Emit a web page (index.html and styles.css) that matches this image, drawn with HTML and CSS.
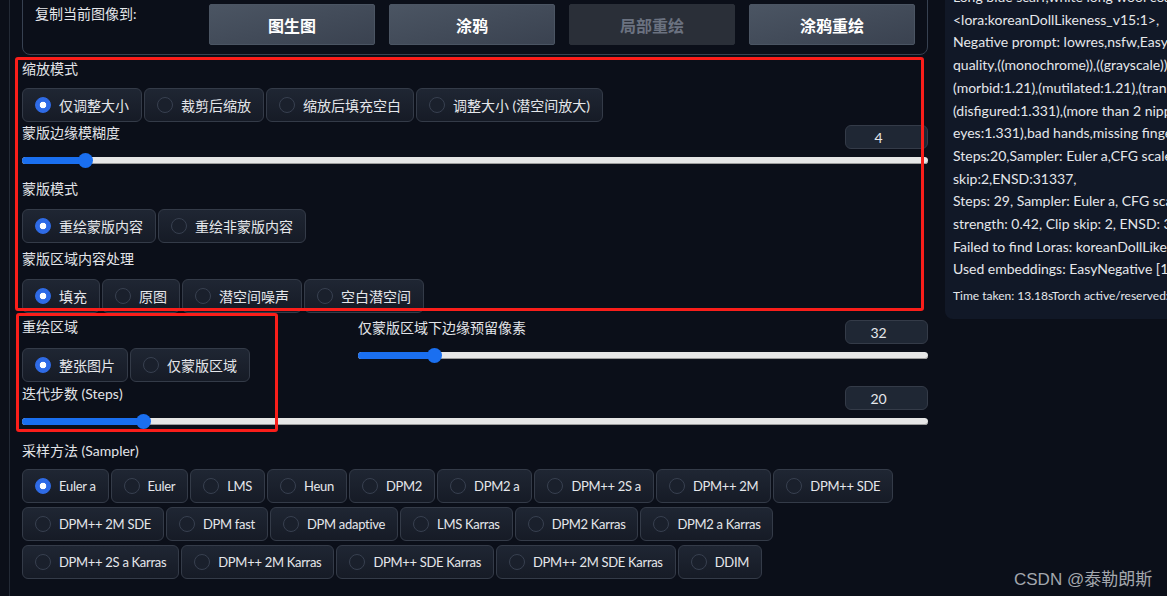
FILE: index.html
```html
<!DOCTYPE html>
<html lang="zh-CN">
<head>
    <meta charset="UTF-8">
    <meta name="viewport" content="width=device-width, initial-scale=1.0">
    <title>局部重绘</title>
    <link rel="stylesheet" href="styles.css">
</head>
<body>
    <div class="page">
        <div class="left">
            <div class="panel">
                <div class="copy-box">
                    <span class="copy-label">复制当前图像到:</span>
                    <div class="copy-buttons">
                        <button class="btn">图生图</button>
                        <button class="btn">涂鸦</button>
                        <button class="btn disabled">局部重绘</button>
                        <button class="btn">涂鸦重绘</button>
                    </div>
                </div>

                <div class="label resize-label">缩放模式</div>
                <div class="radios mt9">
                    <label class="radio checked"><span class="dot"></span>仅调整大小</label>
                    <label class="radio"><span class="dot"></span>裁剪后缩放</label>
                    <label class="radio"><span class="dot"></span>缩放后填充空白</label>
                    <label class="radio"><span class="dot"></span>调整大小 (潜空间放大)</label>
                </div>

                <div class="head mt1">
                    <span class="label">蒙版边缘模糊度</span>
                    <input class="num" type="text" value="4">
                </div>
                <div class="slider mt1">
                    <div class="track"><div class="fill" style="--p: 0.0625"></div><div class="thumb" style="--p: 0.0625"></div></div>
                </div>

                <div class="label mt9">蒙版模式</div>
                <div class="radios mt10">
                    <label class="radio checked"><span class="dot"></span>重绘蒙版内容</label>
                    <label class="radio"><span class="dot"></span>重绘非蒙版内容</label>
                </div>

                <div class="label mt6">蒙版区域内容处理</div>
                <div class="radios mt10">
                    <label class="radio checked"><span class="dot"></span>填充</label>
                    <label class="radio"><span class="dot"></span>原图</label>
                    <label class="radio"><span class="dot"></span>潜空间噪声</label>
                    <label class="radio"><span class="dot"></span>空白潜空间</label>
                </div>

                <div class="split">
                    <div class="split-left">
                        <div class="label">重绘区域</div>
                        <div class="radios mt11">
                            <label class="radio checked"><span class="dot"></span>整张图片</label>
                            <label class="radio"><span class="dot"></span>仅蒙版区域</label>
                        </div>
                    </div>
                    <div class="split-right">
                        <div class="head">
                            <span class="label">仅蒙版区域下边缘预留像素</span>
                            <input class="num" type="text" value="32">
                        </div>
                        <div class="slider mt1">
                            <div class="track"><div class="fill" style="--p: 0.125"></div><div class="thumb" style="--p: 0.125"></div></div>
                        </div>
                    </div>
                </div>

                <div class="head mt2">
                    <span class="label">迭代步数 (Steps)</span>
                    <input class="num" type="text" value="20">
                </div>
                <div class="slider mt1">
                    <div class="track"><div class="fill" style="--p: 0.1275"></div><div class="thumb" style="--p: 0.1275"></div></div>
                </div>

                <div class="label mt10">采样方法 (Sampler)</div>
                <div class="sampler">
                    <div class="radios">
                        <label class="radio checked"><span class="dot"></span>Euler a</label>
                        <label class="radio"><span class="dot"></span>Euler</label>
                        <label class="radio"><span class="dot"></span>LMS</label>
                        <label class="radio"><span class="dot"></span>Heun</label>
                        <label class="radio"><span class="dot"></span>DPM2</label>
                        <label class="radio"><span class="dot"></span>DPM2 a</label>
                        <label class="radio"><span class="dot"></span>DPM++ 2S a</label>
                        <label class="radio"><span class="dot"></span>DPM++ 2M</label>
                        <label class="radio"><span class="dot"></span>DPM++ SDE</label>
                    </div>
                    <div class="radios">
                        <label class="radio"><span class="dot"></span>DPM++ 2M SDE</label>
                        <label class="radio"><span class="dot"></span>DPM fast</label>
                        <label class="radio"><span class="dot"></span>DPM adaptive</label>
                        <label class="radio"><span class="dot"></span>LMS Karras</label>
                        <label class="radio"><span class="dot"></span>DPM2 Karras</label>
                        <label class="radio"><span class="dot"></span>DPM2 a Karras</label>
                    </div>
                    <div class="radios">
                        <label class="radio"><span class="dot"></span>DPM++ 2S a Karras</label>
                        <label class="radio"><span class="dot"></span>DPM++ 2M Karras</label>
                        <label class="radio"><span class="dot"></span>DPM++ SDE Karras</label>
                        <label class="radio"><span class="dot"></span>DPM++ 2M SDE Karras</label>
                        <label class="radio"><span class="dot"></span>DDIM</label>
                    </div>
                </div>

                <!-- red annotation frames -->
                <div class="mark mark-mask"></div>
                <div class="mark mark-area"></div>
            </div>
        </div>

        <div class="info">
            <div>Long blue scarf,white long wool coat,</div>
            <div>&lt;lora:koreanDollLikeness_v15:1&gt;,</div>
            <div>Negative prompt: lowres,nsfw,EasyNegative,(worst</div>
            <div>quality,((monochrome)),((grayscale)),skin spots,</div>
            <div>(morbid:1.21),(mutilated:1.21),(tranny:1.331),</div>
            <div>(disfigured:1.331),(more than 2 nipples:1.331),</div>
            <div>eyes:1.331),bad hands,missing fingers,</div>
            <div>Steps:20,Sampler: Euler a,CFG scale:7,Seed:</div>
            <div>skip:2,ENSD:31337,</div>
            <div>Steps: 29, Sampler: Euler a, CFG scale: 7,</div>
            <div>strength: 0.42, Clip skip: 2, ENSD: 31337</div>
            <div>Failed to find Loras: koreanDollLikeness_v15</div>
            <div>Used embeddings: EasyNegative [119b]</div>
            <div class="time">Time taken: 13.18sTorch active/reserved: 5599/6448 MiB</div>
        </div>
    </div>

    <div class="watermark">CSDN @泰勒朗斯</div>
</body>
</html>
```

FILE: styles.css
```css
body {
    margin: 0;
    background: #0b0f19;
    color: #e5e7eb;
    font-family: Lato, "Noto Sans CJK SC", sans-serif;
    font-size: 14px;
    overflow: hidden;
}
.page {
    display: flex;
    align-items: flex-start;
}
.left {
    width: 928px;
    padding-left: 9px;
    margin-right: 17px;
    box-sizing: border-box;
    flex-shrink: 0;
}
.panel {
    display: flow-root;
    position: relative;
    border-left: 1px solid #232a36;
    padding-left: 12px;
    min-height: 620px;
}

/* copy to box */
.copy-box {
    display: flex;
    margin-top: -8px;
    padding: 11px 12px 9px 12px;
    border: 1px solid #374151;
    border-radius: 8px;
}
.copy-label {
    width: 174px;
    line-height: 20px;
    color: #e5e7eb;
}
.copy-buttons {
    display: flex;
    gap: 14px;
}
.btn {
    width: 166px;
    height: 41px;
    border: 1px solid #4b5563;
    border-radius: 2px;
    background: linear-gradient(to bottom right, #4b5563, #3a4250);
    color: #fff;
    font-family: Lato, "Noto Sans CJK SC", sans-serif;
    font-size: 16px;
    font-weight: bold;
}
.btn.disabled {
    background: #2a2f38;
    border-color: #2a2f38;
    color: #6b7280;
}

/* labels and spacing */
.label {
    line-height: 20px;
    color: #e2e4e8;
}
.resize-label { margin-top: 4px; }
.mt1 { margin-top: 1px; }
.mt2 { margin-top: 2px; }
.mt6 { margin-top: 6px; }
.mt9 { margin-top: 9px; }
.mt10 { margin-top: 10px; }
.mt11 { margin-top: 11px; }

/* radio groups */
.radios {
    display: flex;
    gap: 2px;
}
.radio {
    display: flex;
    align-items: center;
    gap: 8px;
    height: 34px;
    padding: 0 12px;
    box-sizing: border-box;
    border: 1px solid #343b48;
    border-radius: 6px;
    background: linear-gradient(to bottom, #1f2633, #161b26);
    color: #e5e7eb;
    white-space: nowrap;
}
.dot {
    width: 16px;
    height: 16px;
    flex-shrink: 0;
    box-sizing: border-box;
    border-radius: 50%;
    border: 1px solid #384050;
    background: #1a202c;
}
.radio.checked .dot {
    border-color: #2f6be6;
    background: radial-gradient(circle, #fff 0 3px, #2f6be6 3.6px);
}
.sampler {
    display: flex;
    flex-direction: column;
    gap: 4px;
    margin-top: 8px;
}
.sampler .radio {
    font-size: 13px;
    letter-spacing: -0.3px;
}

/* sliders */
.head {
    display: flex;
    justify-content: space-between;
    align-items: flex-start;
}
.num {
    width: 83px;
    height: 24px;
    margin-top: 2px;
    box-sizing: border-box;
    padding: 0 16px 0 0;
    border: 1px solid #343b48;
    border-radius: 6px;
    background: #1f2734;
    color: #e5e7eb;
    font-family: Lato, sans-serif;
    font-size: 14px;
    text-align: center;
}
.slider {
    height: 20px;
}
.track {
    position: relative;
    top: 7px;
    height: 7px;
    border-radius: 4px;
    background: #e6e6e6;
    box-shadow: inset 0 -1px 0 #9c9c9c;
}
.fill {
    height: 100%;
    width: calc(7.5px + var(--p) * (100% - 15px));
    border-radius: 4px;
    background: #1a6ff0;
}
.thumb {
    position: absolute;
    top: -4px;
    left: calc(var(--p) * (100% - 15px));
    width: 15px;
    height: 15px;
    border-radius: 50%;
    background: #1a6ff0;
}

.split {
    display: flex;
    margin-top: 4px;
}
.split-left {
    width: 336px;
}
.split-right {
    flex: 1;
    padding-top: 1px;
}

/* annotation frames */
.mark {
    position: absolute;
    box-sizing: border-box;
    border: 3px solid #fa1e1a;
    border-radius: 3px;
}
.mark-mask {
    left: 5px;
    top: 57px;
    width: 909px;
    height: 254px;
}
.mark-area {
    left: 6px;
    top: 313px;
    width: 262px;
    height: 119px;
}

/* generation info */
.info {
    width: 222px;
    flex-shrink: 0;
    margin-top: -14px;
    padding: 0 0 14px 8px;
    box-sizing: border-box;
    background: #111827;
    border-bottom-left-radius: 8px;
    overflow: hidden;
    white-space: nowrap;
    line-height: 22.7px;
    color: #e5e7eb;
}
.info .time {
    margin-top: 6px;
    font-size: 12px;
    line-height: 18px;
}

.watermark {
    position: absolute;
    left: 1014px;
    top: 565px;
    font-family: "Liberation Sans", "Noto Sans CJK SC", sans-serif;
    font-size: 17px;
    color: #a3a7ad;
}
```
